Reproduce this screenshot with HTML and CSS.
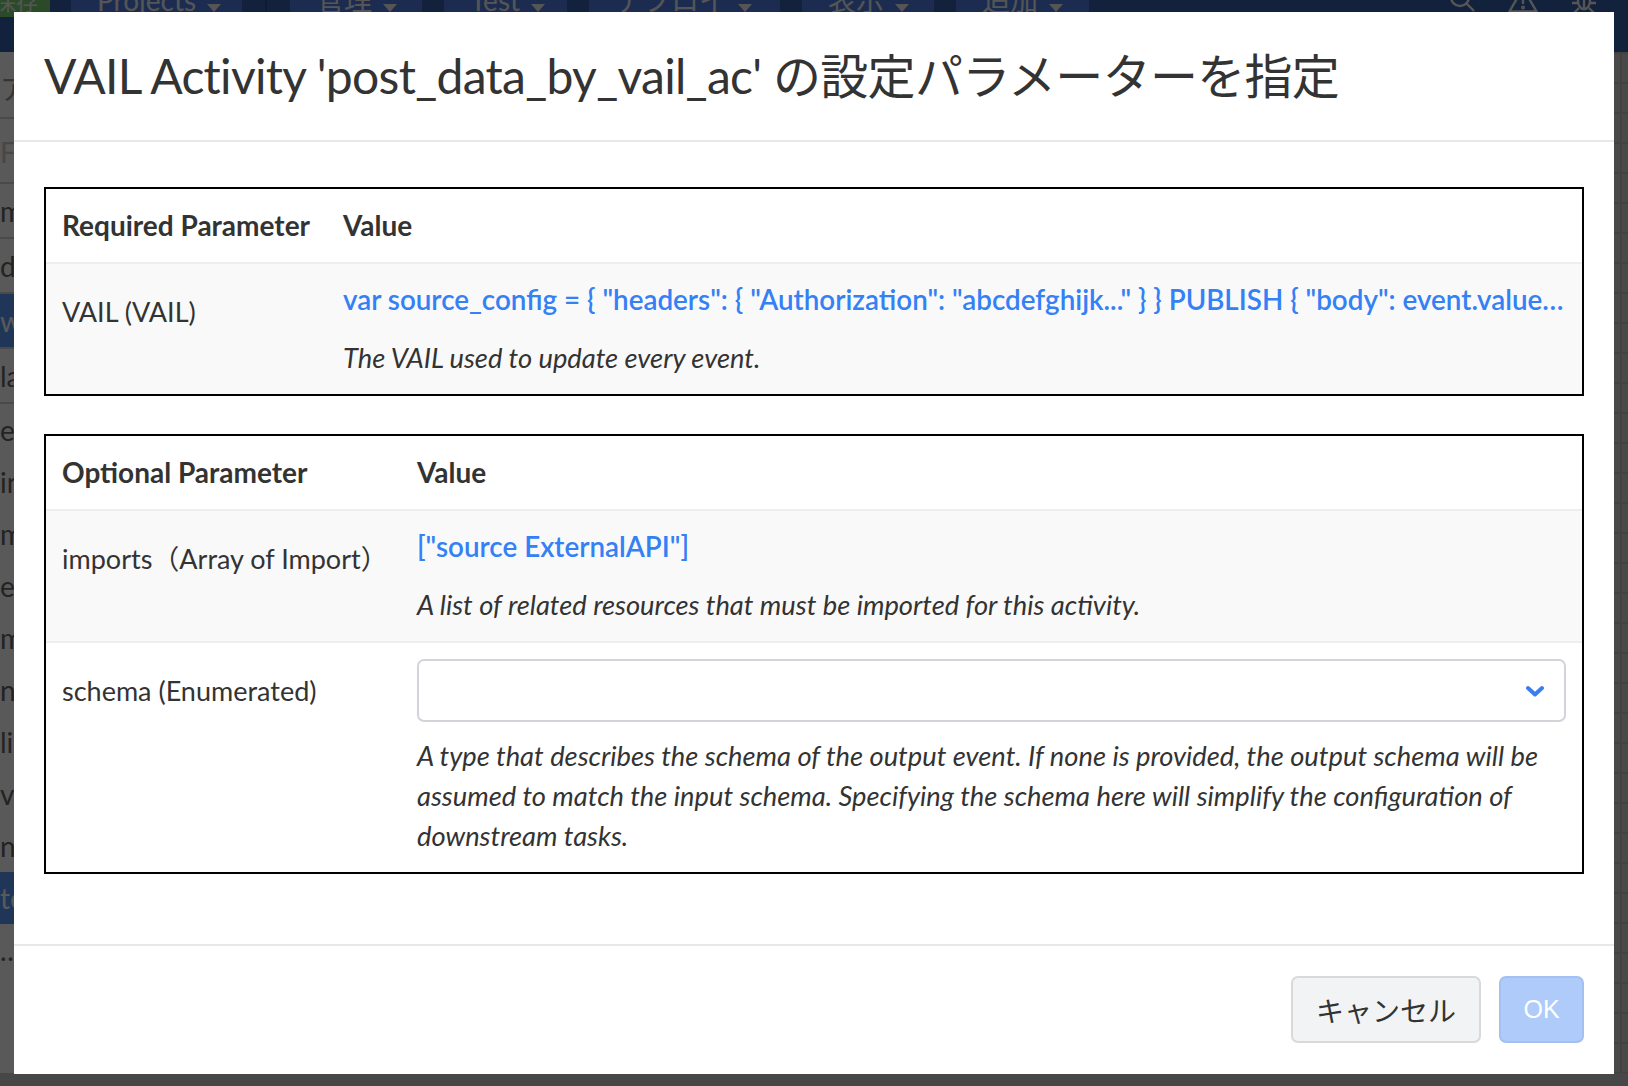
FILE: index.html
```html
<!DOCTYPE html>
<html lang="ja">
<head>
<meta charset="utf-8">
<title>VAIL Activity</title>
<link rel="stylesheet" href="styles.css">
</head>
<body>
<div class="app">
  <header class="topbar">
    <div class="topbar-row">
      <div class="save">保存</div>
      <nav class="menu">
        <span class="menu-item w-projects">Projects<svg class="caret" width="14" height="8" viewBox="0 0 14 8"><path d="M0 0H14L7 8Z"/></svg></span>
        <span class="menu-sep"></span>
        <span class="menu-item w-kanri">管理<svg class="caret" width="14" height="8" viewBox="0 0 14 8"><path d="M0 0H14L7 8Z"/></svg></span>
        <span class="menu-item w-test">Test<svg class="caret" width="14" height="8" viewBox="0 0 14 8"><path d="M0 0H14L7 8Z"/></svg></span>
        <span class="menu-item w-deploy">デプロイ<svg class="caret" width="14" height="8" viewBox="0 0 14 8"><path d="M0 0H14L7 8Z"/></svg></span>
        <span class="menu-item w-view">表示<svg class="caret" width="14" height="8" viewBox="0 0 14 8"><path d="M0 0H14L7 8Z"/></svg></span>
        <span class="menu-item w-add">追加<svg class="caret" width="14" height="8" viewBox="0 0 14 8"><path d="M0 0H14L7 8Z"/></svg></span>
      </nav>
      <div class="tools">
        <svg class="tool" width="30" height="30" viewBox="0 0 30 30"><circle cx="13" cy="12" r="9"/><path d="M19.5 18.5L27 26"/></svg>
        <svg class="tool" width="30" height="30" viewBox="0 0 30 30"><path d="M15 3L28.5 26.5H1.5Z"/><path d="M15 12V19"/><circle cx="15" cy="22.5" r="0.8"/></svg>
        <svg class="tool" width="30" height="30" viewBox="0 0 30 30"><ellipse cx="15" cy="16" rx="6" ry="8"/><path d="M9 12H3M21 12H27M9 18H3M21 18H27M10 23L5 28M20 23L25 28M15 9V24"/></svg>
      </div>
    </div>
  </header>
  <div class="workspace">
    <aside class="sidebar">
      <div class="side-head">アクティビティ</div>
      <div class="side-search">Filter</div>
      <div class="side-row tall">mqtt_source</div>
      <div class="side-row tall">data_cleanup</div>
      <div class="side-row tall selected">workflow_main</div>
      <div class="side-row tall">la_events</div>
      <div class="side-row">event_stream</div>
      <div class="side-row">input_data</div>
      <div class="side-row">main_flow</div>
      <div class="side-row">error_log</div>
      <div class="side-row">model_run</div>
      <div class="side-row">notify</div>
      <div class="side-row">list_items</div>
      <div class="side-row">view_all</div>
      <div class="side-row">node_set</div>
      <div class="side-row selected">test_run</div>
      <div class="side-row">…</div>
    </aside>
    <main class="canvas"></main>
  </div>
  <div class="statusbar"></div>
</div>

<div class="backdrop"></div>

<div class="modal" role="dialog" aria-modal="true">
  <div class="modal-header">
    <h4 class="modal-title">VAIL Activity 'post_data_by_vail_ac' の設定パラメーターを指定</h4>
  </div>
  <div class="modal-body">
    <table class="params">
      <colgroup><col class="col-req"><col></colgroup>
      <thead>
        <tr><th>Required Parameter</th><th>Value</th></tr>
      </thead>
      <tbody>
        <tr class="striped">
          <td class="name">VAIL (VAIL)</td>
          <td class="value">
            <div class="code">var source_config = { "headers": { "Authorization": "abcdefghijk..." } } PUBLISH { "body": event.value_json } TO HTTP "https://example.com/api" WITH source_config</div>
            <p class="help">The VAIL used to update every event.</p>
          </td>
        </tr>
      </tbody>
    </table>

    <table class="params params-optional">
      <colgroup><col class="col-opt"><col></colgroup>
      <thead>
        <tr><th>Optional Parameter</th><th>Value</th></tr>
      </thead>
      <tbody>
        <tr class="striped">
          <td class="name">imports（Array of Import）</td>
          <td class="value">
            <div class="code">["source ExternalAPI"]</div>
            <p class="help">A list of related resources that must be imported for this activity.</p>
          </td>
        </tr>
        <tr>
          <td class="name">schema (Enumerated)</td>
          <td class="value">
            <div class="select-box">
              <svg class="chevron" width="20" height="12" viewBox="0 0 20 12"><polyline points="3,3 10,9.5 17,3"/></svg>
            </div>
            <p class="help help-select">A type that describes the schema of the output event. If none is provided, the output schema will be assumed to match the input schema. Specifying the schema here will simplify the configuration of downstream tasks.</p>
          </td>
        </tr>
      </tbody>
    </table>
  </div>
  <div class="modal-footer">
    <button class="btn btn-default" type="button">キャンセル</button>
    <button class="btn btn-primary" type="button" disabled>OK</button>
  </div>
</div>
</body>
</html>
```
FILE: styles.css
```css
* { box-sizing: border-box; }

html, body { margin: 0; padding: 0; }

body {
  width: 1628px;
  height: 1086px;
  overflow: hidden;
  font-family: Lato, "Noto Sans CJK JP", sans-serif;
  color: #333;
  background: #fff;
}

/* ---------- background application ---------- */
.app {
  display: flex;
  flex-direction: column;
  height: 1086px;
}

.topbar {
  flex: none;
  height: 52px;
  background: #3661ae;
  color: #f4f4f4;
  font-size: 28px;
  overflow: hidden;
}

.topbar-row {
  display: flex;
  align-items: stretch;
  height: 34px;
  margin-top: -17px;
  line-height: 34px;
}

.save {
  flex: none;
  width: 50px;
  background: #78d372;
  display: flex;
  justify-content: flex-end;
  padding-right: 12px;
  font-size: 22px;
  white-space: nowrap;
  font-family: "Noto Sans CJK JP", sans-serif;
}

.menu {
  display: flex;
  gap: 22px;
  margin-left: 21px;
}

.menu-item {
  display: flex;
  align-items: center;
  gap: 11px;
  padding-left: 26px;
  background: #507ee5;
  white-space: nowrap;
}

.menu-item .caret { fill: #f4f4f4; margin-top: 16px; }

.w-projects { width: 171px; }
.w-kanri { width: 132px; }
.w-test { width: 123px; }
.w-deploy { width: 191px; }
.w-view { width: 132px; }
.w-add { width: 133px; }

.menu-sep {
  width: 2px;
  background: #2a4f94;
  margin: 0 1px;
}

.tools {
  margin-left: auto;
  display: flex;
  align-items: center;
  gap: 31px;
  padding-right: 29px;
}

.tool {
  fill: none;
  stroke: #f4f4f4;
  stroke-width: 2.4;
}

.workspace {
  flex: 1;
  display: flex;
  min-height: 0;
}

.sidebar {
  flex: none;
  width: 300px;
  background: #fff;
  color: #666;
  font-size: 28px;
  overflow: hidden;
  white-space: nowrap;
}

.side-head {
  height: 65px;
  line-height: 72px;
  color: #999;
  font-family: "Noto Sans CJK JP", sans-serif;
}

.side-search {
  height: 67px;
  line-height: 67px;
  color: #ccc;
  border-top: 2px solid #d3d3d3;
  border-bottom: 2px solid #d3d3d3;
}

.side-row {
  height: 52px;
  line-height: 52px;
}

.side-row.tall {
  height: 55px;
  line-height: 55px;
  border-bottom: 2px solid #d3d3d3;
}

.side-row.selected {
  background: #5a9aff;
  color: #fff;
}

.canvas {
  flex: 1;
  background-color: #d0d0d0;
  background-image:
    linear-gradient(#bdbdbd 2px, transparent 2px),
    linear-gradient(90deg, #bdbdbd 2px, transparent 2px);
  background-size: 30px 30px;
}

.statusbar {
  flex: none;
  height: 13px;
  background: #cccccc;
}

.backdrop {
  position: fixed;
  inset: 0;
  background: rgba(0, 0, 0, 0.65);
}

/* ---------- modal ---------- */
.modal {
  position: fixed;
  left: 14px;
  top: 12px;
  width: 1600px;
  background: #fff;
  z-index: 10;
}

.modal-header {
  padding: 30px;
  border-bottom: 2px solid #e8e8e8;
}

.modal-title {
  margin: 0;
  font-size: 48px;
  font-weight: 400;
  line-height: 68px;
  letter-spacing: -0.7px;
  color: #333;
  white-space: nowrap;
}

.modal-body {
  padding: 45px 30px 70px;
}

.params {
  width: 100%;
  table-layout: fixed;
  border-collapse: separate;
  border-spacing: 0;
  border: 2px solid #000;
  font-size: 27px;
  line-height: 40px;
}

.params-optional { margin-top: 38px; }

.col-req { width: 281px; }
.col-opt { width: 355px; }

.params th {
  text-align: left;
  font-weight: 700;
  font-size: 28px;
  padding: 16px 16px 17px;
  vertical-align: top;
  color: #333;
  white-space: nowrap;
}

.params td {
  padding: 16px;
  vertical-align: top;
  border-top: 2px solid #eeeeee;
}

.params td.name { padding-top: 28px; white-space: nowrap; }

.params tr.striped td { background: #f9f9f9; }

.code {
  color: #3480f5;
  font-weight: 600;
  font-size: 27.8px;
  white-space: nowrap;
  overflow: hidden;
  text-overflow: ellipsis;
}

.help {
  margin: 18px 0 0;
  font-style: italic;
  font-size: 27.3px;
  color: #333;
}

.help-select { margin-top: 14px; }

.select-box {
  height: 63px;
  border: 2px solid #d3d4da;
  border-radius: 7px;
  background: #fff;
  display: flex;
  align-items: center;
  justify-content: flex-end;
  padding-right: 19px;
}

.chevron {
  fill: none;
  stroke: #3a7ff0;
  stroke-width: 4;
  stroke-linecap: round;
  stroke-linejoin: round;
}

.modal-footer {
  border-top: 2px solid #e8e8e8;
  padding: 30px 30px 31px;
  display: flex;
  justify-content: flex-end;
  gap: 18px;
}

.btn {
  height: 67px;
  border-radius: 7px;
  border: 2px solid;
  font-size: 28px;
  line-height: 1;
  padding: 0;
  display: flex;
  align-items: center;
  justify-content: center;
  font-family: "Noto Sans CJK JP", sans-serif;
}

.btn-default {
  width: 190px;
  background: #f2f3f5;
  border-color: #d9d9d9;
  color: #333;
}

.btn-primary {
  width: 85px;
  background: #aecbfa;
  border-color: #a3c0f2;
  color: #fff;
  font-family: "Liberation Sans", Arial, sans-serif;
  font-size: 25px;
}
```
